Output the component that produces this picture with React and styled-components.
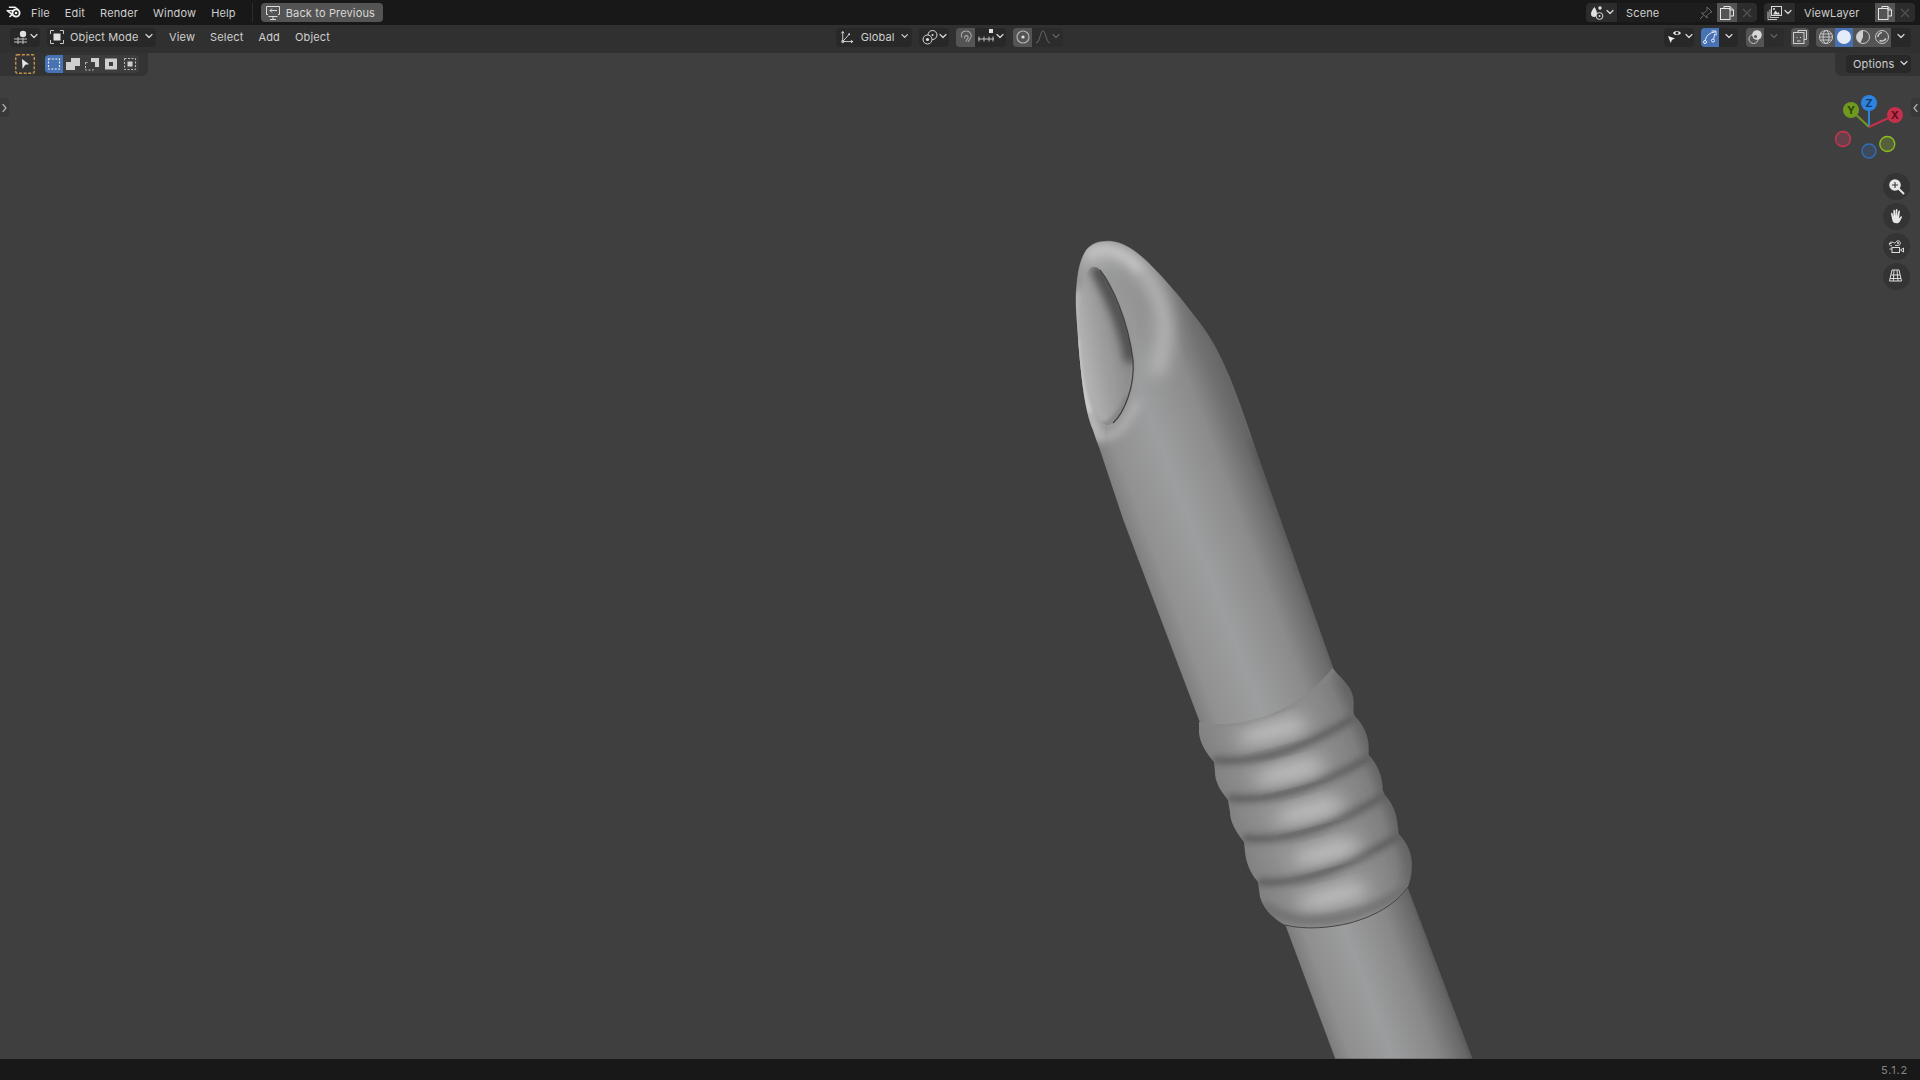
import styled, { createGlobalStyle } from "styled-components";

const GlobalStyle = createGlobalStyle`
  html, body {
    margin: 0;
    height: 100%;
    overflow: hidden;
    background: #181818;
  }
  #root {
    height: 100%;
  }
`;

const Screen = styled.div`
  display: flex;
  flex-direction: column;
  height: 100vh;
  font-family: Inter, "Liberation Sans", sans-serif;
  font-size: 11px;
  letter-spacing: 0.15px;
  color: #cfcfcf;
`;

const TopBar = styled.header`
  display: flex;
  align-items: center;
  flex: 0 0 25px;
  padding: 0 5px 0 6px;
  background: #181818;
`;

const Menu = styled.nav`
  display: flex;
  gap: 15px;
  margin-left: 8px;
`;

const Divider = styled.span`
  width: 1px;
  height: 19px;
  margin: 0 8px 0 16px;
  background: #2c2c2c;
`;

const BackButton = styled.button`
  display: flex;
  align-items: center;
  gap: 5px;
  width: 122px;
  height: 19px;
  padding: 0 0 0 4px;
  border: 0;
  border-radius: 4px;
  background: #545454;
  color: #d8d8d8;
  font: inherit;
  letter-spacing: inherit;
`;

const Spacer = styled.div`
  flex: 1;
`;

const Row = styled.div`
  display: flex;
  align-items: center;
  margin-left: ${(p) => p.$ml ?? 0}px;
`;

const Group = styled.div`
  display: flex;
  align-items: stretch;
  height: ${(p) => p.$h ?? 19}px;
  margin-left: ${(p) => p.$ml ?? 0}px;
  border-radius: 4px;
  overflow: hidden;
`;

const tones = {
  dark: "#282828",
  light: "#545454",
  mid: "#3d3d3d",
  blue: "#4772b3",
  dim: "#2c2c2c",
  field: "#1d1d1d",
};

const Seg = styled.div`
  display: flex;
  align-items: center;
  justify-content: ${(p) => p.$justify ?? "center"};
  gap: ${(p) => p.$gap ?? 1}px;
  box-sizing: border-box;
  flex: 0 0 ${(p) => p.$w}px;
  width: ${(p) => p.$w}px;
  padding: ${(p) => p.$pad ?? 0};
  background: ${(p) => tones[p.$tone ?? "dark"]};
  margin-left: ${(p) => p.$ml ?? 0}px;
`;

const Label = styled.span`
  flex: 1;
  white-space: nowrap;
`;

const Header = styled.div`
  display: flex;
  align-items: center;
  flex: 0 0 28px;
  padding: 0 9px 4px 10px;
  box-sizing: border-box;
  background: #303030;
`;

const HeaderLeft = styled.div`
  display: flex;
  align-items: center;
  flex: 0 0 826px;
`;

const HeaderMenu = styled.nav`
  display: flex;
  gap: 15px;
  margin-left: 13px;
`;

const Viewport = styled.main`
  position: relative;
  flex: 1;
  background: #3f3f3f;
  overflow: hidden;
`;

const Scene3D = styled.svg`
  position: absolute;
  inset: 0;
  width: 100%;
  height: 100%;
`;

const ToolRow = styled.div`
  position: relative;
  display: flex;
  justify-content: space-between;
  align-items: flex-start;
`;

const ToolPanel = styled.div`
  display: flex;
  align-items: center;
  width: 148px;
  height: 23px;
  box-sizing: border-box;
  padding: 0 0 2px 15px;
  background: #333333;
  border-radius: 0 0 6px 0;
`;

const OptionsPanel = styled.div`
  display: flex;
  justify-content: flex-end;
  align-items: center;
  width: 85px;
  height: 23px;
  box-sizing: border-box;
  padding: 0 9px 1px 0;
  background: #333333;
  border-radius: 0 0 0 6px;
`;

const OptionsButton = styled.div`
  display: flex;
  align-items: center;
  justify-content: space-between;
  width: 65px;
  height: 18px;
  box-sizing: border-box;
  padding: 0 3px 0 7px;
  background: #282828;
  border-radius: 4px;
`;

const EdgeTab = styled.div`
  position: absolute;
  top: 45px;
  ${(p) => (p.$right ? "right: 0;" : "left: 0;")}
  display: flex;
  align-items: center;
  justify-content: center;
  width: 9px;
  height: 19px;
  background: #383838;
  border-radius: ${(p) => (p.$right ? "4px 0 0 4px" : "0 4px 4px 0")};
`;

const Gizmo = styled.svg`
  position: absolute;
  top: 37px;
  right: 12px;
  width: 76px;
  height: 74px;
`;

const NavStack = styled.div`
  position: absolute;
  top: 120px;
  right: 10px;
  display: flex;
  flex-direction: column;
  gap: 3px;
`;

const NavButton = styled.div`
  display: flex;
  align-items: center;
  justify-content: center;
  width: 27px;
  height: 27px;
  border-radius: 50%;
  background: #343434;
`;

const StatusBar = styled.footer`
  display: flex;
  justify-content: flex-end;
  align-items: center;
  flex: 0 0 21px;
  padding-right: 12px;
  background: #181818;
  color: #858585;
  font-size: 11px;
  letter-spacing: 0.8px;
`;

const Chev = ({ dir = "down", color = "#d8d8d8" }) => {
  const pts = {
    down: "1,1.5 4,4.5 7,1.5",
    left: "5,0.5 2,4 5,7.5",
    right: "2,0.5 5,4 2,7.5",
  }[dir];
  return (
    <svg width="8" height="8" viewBox="0 0 8 8" fill="none">
      <polyline points={pts} stroke={color} strokeWidth="1.2" strokeLinecap="round" strokeLinejoin="round" />
    </svg>
  );
};

const Ico = ({ children, size = 16, ...rest }) => (
  <svg width={size} height={size} viewBox={`0 0 ${size} ${size}`} fill="none" stroke="#dadada" strokeWidth="1" {...rest}>
    {children}
  </svg>
);

const White = "#e0e0e0";

const BlenderLogo = () => (
  <Ico size={17}>
    <circle cx="10" cy="9" r="3.6" strokeWidth="1.9" stroke="#f0f0f0" />
    <circle cx="10" cy="9" r="1.3" fill="#f0f0f0" stroke="none" />
    <path d="M1 6.6h7M3.4 3.2l5.6 .1 3 2.2M1.2 6.6l5 4M6.2 10.6 3.8 12.6" stroke="#f0f0f0" strokeWidth="1.4" strokeLinecap="round" />
  </Ico>
);

const BackIcon = () => (
  <Ico>
    <path d="M3 9.500H1.500v-8h13v8H13" />
    <path d="M5 14.500h6M8 11.500v3M12 5.500H5M7 3.500l-2 2 2 2" />
    <path d="M3.500 11.500h9" />
  </Ico>
);

const EditorIcon = () => (
  <Ico>
    <circle cx="10" cy="5" r="3.2" fill={White} stroke="none" />
    <path d="M1 10h13M1 13h13M5 8v7M10 9v6" stroke="#bdbdbd" />
  </Ico>
);

const ModeIcon = () => (
  <Ico>
    <rect x="4.500" y="4.500" width="7" height="7" fill={White} stroke="none" />
    <path d="M1.500 5V1.500H5M11 1.500h3.500V5M14.500 11v3.500H11M5 14.500H1.500V11" stroke="#c8c8c8" />
  </Ico>
);

const OrientIcon = () => (
  <Ico>
    <path d="M3 2v11h11M3 13l7-8M1.500 4 3 2l1.500 2M12 11.500l2 1.500-2 1.500" />
    <circle cx="3" cy="13" r="1.300" />
    <circle cx="10" cy="5" r="1" fill={White} stroke="none" />
  </Ico>
);

const PivotIcon = () => (
  <Ico>
    <circle cx="10.500" cy="6" r="4.500" />
    <circle cx="5.500" cy="10.500" r="4.500" fill="#282828" />
    <circle cx="5.500" cy="10.500" r="1.600" fill={White} stroke="none" />
    <circle cx="10.500" cy="6" r="1" fill={White} stroke="none" />
  </Ico>
);

const MagnetIcon = () => (
  <Ico stroke="#a8a8a8">
    <path d="M4 8.500C2 5.500 4 2 8 2c4 0 6.500 3.500 4.500 7l-2.500 4M7 9.500c-1-1.200 0-3 1.500-2.900 1.500.1 2 1.600 1.300 2.700l-2 3.200" strokeWidth="1.100" />
  </Ico>
);

const IncrementIcon = () => (
  <Ico size={18}>
    <rect x="12" y="1" width="4" height="4" fill={White} stroke="none" />
    <path d="M1 11h16M2 8.500v5M7 8.500v5M12 8.500v5M16 8.500v5" stroke="#c0c0c0" />
  </Ico>
);

const ProportionalIcon = () => (
  <Ico stroke="#b0b0b0">
    <circle cx="8" cy="8" r="6" strokeWidth="1.200" />
    <circle cx="8" cy="8" r="1.600" fill={White} stroke="none" />
  </Ico>
);

const FalloffIcon = () => (
  <Ico stroke="#5f5f5f">
    <path d="M1 14c4 0 4-12 7-12s3 12 7 12" strokeWidth="1.100" />
  </Ico>
);

const SceneIcon = () => (
  <Ico>
    <path d="M5.500 2c-2 2.600-3.500 4.600-3.500 7 0 1.600 1 3 3 3 1.500 0 3-1 3-3.500 0-2-1-4-2.500-6.500z" fill={White} stroke="none" />
    <circle cx="11" cy="3" r="1.700" fill={White} stroke="none" />
    <circle cx="10.500" cy="11" r="3.400" fill="#2c2c2c" />
    <circle cx="10.500" cy="11" r="1" fill={White} stroke="none" />
  </Ico>
);

const PinIcon = () => (
  <Ico stroke="#6a6a6a">
    <path d="M9 2l5 5-2 .5-3 3 .2 2.500L3.500 8l2.500.2 3-3zM5.500 10.500 2 14" />
  </Ico>
);

const CopyIcon = () => (
  <Ico stroke="#e4e4e4">
    <path d="M5 3.500V1.500h6l3.500 3.500v6h-3M11 1.500v3.500h3.500" />
    <rect x="1.500" y="3.500" width="9.500" height="11" />
  </Ico>
);

const CloseIcon = ({ color = "#505050" }) => (
  <Ico stroke={color} strokeWidth="1.400">
    <path d="M4 4l8 8M12 4l-8 8" />
  </Ico>
);

const LayerIcon = () => (
  <Ico>
    <rect x="4.500" y="1.500" width="10" height="9" fill="#2c2c2c" />
    <path d="M6 9.500l2.500-4 2 2.500 1-1 1.500 2.500z" fill={White} stroke="none" />
    <circle cx="7" cy="4" r="1" fill={White} stroke="none" />
    <path d="M3 4.500v8h9M1 6.500v8h9" stroke="#c8c8c8" />
  </Ico>
);

const VisibilityIcon = () => (
  <Ico size={18}>
    <path d="M7 5c1.500-2.700 6-2.700 8 0-2 2.700-6.500 2.700-8 0z" fill="#f0f0f0" stroke="none" />
    <circle cx="11" cy="5" r="1.600" fill="#282828" stroke="none" />
    <path d="M2 8l7 2.500-3 1.200-1.300 3.300z" fill="#f0f0f0" stroke="none" />
  </Ico>
);

const GizmoIcon = () => (
  <Ico stroke="#eaf0fa">
    <path d="M3 13C3.500 7 7.500 3.500 13 3M9.500 2H14v4.500M11 11c1-2 1.500-4 1.500-6" />
    <circle cx="3" cy="13" r="1.500" fill="#4772b3" />
    <circle cx="11" cy="11.500" r="1.500" fill="#4772b3" />
  </Ico>
);

const OverlayIcon = () => (
  <Ico>
    <circle cx="6.500" cy="10" r="4.500" stroke="#c4c4c4" />
    <circle cx="10" cy="6" r="4.800" fill="#d8d8d8" stroke="none" />
    <circle cx="8.500" cy="7.500" r="1.500" fill="#545454" stroke="none" />
  </Ico>
);

const XrayIcon = () => (
  <Ico stroke="#d0d0d0">
    <path d="M6 3.500V1.500h8.500v9H12" />
    <rect x="1.500" y="3.500" width="10.500" height="11" />
    <path d="M5 8v1M8.500 8v1M5 12h3.500" />
  </Ico>
);

const WireIcon = () => (
  <Ico stroke="#c8c8c8">
    <circle cx="8" cy="8" r="6.500" />
    <ellipse cx="8" cy="8" rx="3" ry="6.500" />
    <path d="M1.500 8h13M2.500 5h11M2.500 11h11" />
  </Ico>
);

const SolidIcon = () => (
  <Ico>
    <circle cx="8" cy="8" r="7" fill="#e4ecfa" stroke="none" />
  </Ico>
);

const MaterialIcon = () => (
  <Ico stroke="#c8c8c8">
    <circle cx="8" cy="8" r="6.500" />
    <path d="M8 1.500a6.500 6.500 0 0 0-6.500 6.500c0 2.700 1.600 5 4 6L8 8z" fill="#cfcfcf" stroke="none" />
  </Ico>
);

const RenderedIcon = () => (
  <Ico stroke="#c8c8c8">
    <circle cx="8" cy="8" r="6.500" />
    <path d="M4 8c0-2.500 1.500-4 4-4.500M5.500 11.500c2 1.200 5 .5 6.500-2" strokeWidth="1.500" />
  </Ico>
);

const SelectToolIcon = () => (
  <svg width="20" height="20" viewBox="0 0 20 20" fill="none">
    <rect x="0.750" y="0.750" width="18.500" height="18.500" rx="1.500" stroke="#c4924d" strokeWidth="1.400" strokeDasharray="3 1.600" />
    <path d="M7 5l7 5.200-3.800.500L7.600 15z" fill="#e8e8e8" />
  </svg>
);

const SetIcon = () => (
  <Ico>
    <rect x="2.500" y="3" width="11" height="10" stroke="#f0f0f0" strokeWidth="1.200" strokeDasharray="2 1.400" />
  </Ico>
);

const ExtendIcon = () => (
  <Ico>
    <path d="M6 2h9v8H10v4H1V6h5z" fill="#cfcfcf" stroke="none" />
  </Ico>
);

const SubtractIcon = () => (
  <Ico>
    <path d="M7 2h8v9h-4V6H7z" fill="#cfcfcf" stroke="none" />
    <path d="M1.500 6.500h3M1.500 6.500v7.500h8v-2" stroke="#bcbcbc" strokeDasharray="2 1.500" />
  </Ico>
);

const InvertIcon = () => (
  <Ico>
    <path d="M2 2.500h12v11H2zM6 6v4h4V6z" fill="#cfcfcf" fillRule="evenodd" stroke="none" />
  </Ico>
);

const IntersectIcon = () => (
  <Ico>
    <rect x="2.500" y="2.500" width="11" height="11" stroke="#bcbcbc" strokeDasharray="2 1.500" />
    <rect x="5.500" y="5.500" width="5" height="5" fill="#cfcfcf" stroke="none" />
  </Ico>
);

const ZoomIcon = () => (
  <Ico size={20}>
    <path d="M11.500 11.500 16.500 16.500" stroke="#e6e6e6" strokeWidth="2" strokeLinecap="round" />
    <circle cx="8" cy="8" r="5.800" fill="#e6e6e6" stroke="none" />
    <path d="M5 8h6M8 5v6" stroke="#333" strokeWidth="1.100" />
  </Ico>
);

const HandIcon = () => (
  <Ico size={20}>
    <path
      d="M4 6.500c0-1 1.500-1 1.600 0l.7 3 .1-6c0-1.100 1.500-1.100 1.600 0l.3 5.500.5-6.300c.1-1 1.600-.9 1.600.1l-.2 6.400 1.200-5c.3-1 1.700-.6 1.500.4l-.9 6.900 1.700-2.100c.8-.7 1.800.2 1.200 1.100L12.600 15c-.8 1-1.800 1.300-3.100 1.300-2.400 0-3.700-1.100-4.200-3.300z"
      fill="#e6e6e6"
      stroke="none"
    />
  </Ico>
);

const CameraIcon = () => (
  <Ico size={20}>
    <path d="M5 8.800h-1c-2.200 0-2.200-3.600 0-3.600h1.500c1 0 1.300.8 2.200.8 1 0 1.300-2.200 3.500-2.200 2.800 0 2.800 4.600 0 4.600H8" stroke="#dcdcdc" />
    <circle cx="11" cy="6" r="1" fill="#dcdcdc" stroke="none" />
    <path d="M2.500 6.500h2" stroke="#dcdcdc" />
    <rect x="5" y="10.500" width="7.500" height="5" stroke="#dcdcdc" />
    <path d="M2.500 12h2.500M16.500 11v4l-3-2z" stroke="#dcdcdc" />
  </Ico>
);

const PerspectiveIcon = () => (
  <Ico size={20}>
    <path d="M5 3h7l2.500 11H2.500zM4 8h9M3 11.500h11M7 3 6.300 14M10 3l1 11" stroke="#dcdcdc" />
  </Ico>
);

const tipPath =
  "M1076,310 C1075,280 1078,262 1086,250 C1092,243 1100,240 1112,241 C1125,243 1135,250 1148,262 C1165,279 1180,296 1195,316 C1208,332 1218,350 1225,366 C1232,381 1238,398 1243,412 L1345,700 L1210,750 L1123,520 L1093,430 C1084,410 1080,370 1076,310 Z";
const ringEdge =
  "M1333,668 C1340,678 1354,686 1354,703 C1354,708 1353,712 1355,716 C1363,724 1369,735 1369,748 L1369,755 C1377,763 1383,776 1383,790 L1385,795 C1393,803 1397,814 1398,826 L1399,834 C1408,843 1413,855 1412,868 C1412,875 1410,882 1408,887";
const ringPath = `${ringEdge} C1395,905 1375,916 1350,923 C1330,928 1305,930 1285,925 C1272,918 1263,908 1260,897 L1258,882 C1250,873 1246,862 1245,852 L1244,842 C1236,832 1230,822 1230,812 L1228,800 C1220,790 1215,782 1215,772 L1214,762 C1205,752 1200,742 1199,733 L1199,722 C1240,730 1295,715 1333,668 Z`;
const holePath =
  "M1100,270 C1112,285 1128,320 1133,360 C1135,390 1122,420 1110,425 C1098,428 1088,400 1082,370 C1078,335 1079,300 1084,280 C1088,266 1094,264 1100,270 Z";

const grooves = [
  "M1213,760 C1260,765 1310,745 1355,717",
  "M1228,798 C1275,803 1325,783 1370,757",
  "M1243,838 C1290,843 1340,823 1385,795",
  "M1258,882 C1305,886 1355,863 1400,835",
];
const highlights = [
  [1273, 731],
  [1290, 772],
  [1310, 811],
  [1327, 852],
  [1333, 896],
];

const App = () => (
  <Screen>
    <GlobalStyle />
    <TopBar>
      <BlenderLogo />
      <Menu>
        <span>File</span>
        <span>Edit</span>
        <span>Render</span>
        <span>Window</span>
        <span>Help</span>
      </Menu>
      <Divider />
      <BackButton>
        <BackIcon />
        Back to Previous
      </BackButton>
      <Spacer />
      <Group>
        <Seg $w={31} $tone="dim">
          <SceneIcon />
          <Chev />
        </Seg>
        <Seg $w={99} $tone="field" $pad="0 3px 0 8px" $ml={1}>
          <Label>Scene</Label>
          <PinIcon />
        </Seg>
        <Seg $w={20} $tone="light">
          <CopyIcon />
        </Seg>
        <Seg $w={20} $tone="dim">
          <CloseIcon />
        </Seg>
      </Group>
      <Group $ml={7}>
        <Seg $w={31} $tone="dim">
          <LayerIcon />
          <Chev />
        </Seg>
        <Seg $w={79} $tone="field" $pad="0 0 0 8px" $ml={1}>
          <Label>ViewLayer</Label>
        </Seg>
        <Seg $w={20} $tone="light">
          <CopyIcon />
        </Seg>
        <Seg $w={20} $tone="dim">
          <CloseIcon />
        </Seg>
      </Group>
    </TopBar>

    <Header>
      <HeaderLeft>
        <Group>
          <Seg $w={30}>
            <EditorIcon />
            <Chev />
          </Seg>
        </Group>
        <Group $ml={7}>
          <Seg $w={109} $gap={5} $pad="0 3px 0 2px">
            <ModeIcon />
            <Label>Object Mode</Label>
            <Chev />
          </Seg>
        </Group>
        <HeaderMenu>
          <span>View</span>
          <span>Select</span>
          <span>Add</span>
          <span>Object</span>
        </HeaderMenu>
      </HeaderLeft>
      <Group>
        <Seg $w={76} $gap={6} $pad="0 4px 0 4px">
          <OrientIcon />
          <Label>Global</Label>
          <Chev />
        </Seg>
      </Group>
      <Group $ml={7}>
        <Seg $w={30}>
          <PivotIcon />
          <Chev />
        </Seg>
      </Group>
      <Group $ml={7}>
        <Seg $w={19} $tone="light">
          <MagnetIcon />
        </Seg>
        <Seg $w={31}>
          <IncrementIcon />
          <Chev />
        </Seg>
      </Group>
      <Group $ml={7}>
        <Seg $w={19} $tone="light">
          <ProportionalIcon />
        </Seg>
        <Seg $w={31} $tone="dim">
          <FalloffIcon />
          <Chev color="#5f5f5f" />
        </Seg>
      </Group>
      <Spacer />
      <Row>
        <Group>
          <Seg $w={30}>
            <VisibilityIcon />
            <Chev />
          </Seg>
        </Group>
        <Group $ml={7}>
          <Seg $w={18} $tone="blue">
            <GizmoIcon />
          </Seg>
          <Seg $w={19}>
            <Chev />
          </Seg>
        </Group>
        <Group $ml={8}>
          <Seg $w={18} $tone="light">
            <OverlayIcon />
          </Seg>
          <Seg $w={20} $tone="dim">
            <Chev color="#5f5f5f" />
          </Seg>
        </Group>
        <Group $ml={7}>
          <Seg $w={18} $tone="light">
            <XrayIcon />
          </Seg>
        </Group>
        <Group $ml={7}>
          <Seg $w={19} $tone="light">
            <WireIcon />
          </Seg>
          <Seg $w={18} $tone="blue">
            <SolidIcon />
          </Seg>
          <Seg $w={19} $tone="light">
            <MaterialIcon />
          </Seg>
          <Seg $w={19} $tone="light">
            <RenderedIcon />
          </Seg>
          <Seg $w={20}>
            <Chev />
          </Seg>
        </Group>
      </Row>
    </Header>

    <Viewport>
      <Scene3D viewBox="0 53 1920 1006" preserveAspectRatio="none">
        <defs>
          <linearGradient id="upperTube" gradientUnits="userSpaceOnUse" x1="1123" y1="520" x2="1261" y2="468">
            <stop offset="0" stopColor="#7e7e7e" />
            <stop offset="0.12" stopColor="#919191" />
            <stop offset="0.42" stopColor="#9d9e9f" />
            <stop offset="0.75" stopColor="#8b8b8b" />
            <stop offset="0.95" stopColor="#6a6a6a" />
            <stop offset="1" stopColor="#5a5a5a" />
          </linearGradient>
          <linearGradient id="lowerTube" gradientUnits="userSpaceOnUse" x1="1313" y1="1000" x2="1435" y2="955">
            <stop offset="0" stopColor="#7c7c7c" />
            <stop offset="0.12" stopColor="#8f8f8f" />
            <stop offset="0.42" stopColor="#9c9d9e" />
            <stop offset="0.75" stopColor="#888888" />
            <stop offset="0.95" stopColor="#686868" />
            <stop offset="1" stopColor="#585858" />
          </linearGradient>
          <linearGradient id="ringBase" gradientUnits="userSpaceOnUse" x1="1230" y1="815" x2="1385" y2="757">
            <stop offset="0" stopColor="#828282" />
            <stop offset="0.2" stopColor="#919191" />
            <stop offset="0.55" stopColor="#969696" />
            <stop offset="0.85" stopColor="#808080" />
            <stop offset="1" stopColor="#626262" />
          </linearGradient>
          <linearGradient id="holeFill" gradientUnits="userSpaceOnUse" x1="1080" y1="350" x2="1134" y2="340">
            <stop offset="0" stopColor="#b4b4b4" />
            <stop offset="0.4" stopColor="#9e9e9e" />
            <stop offset="1" stopColor="#838383" />
          </linearGradient>
          <filter id="blur2" x="-30%" y="-30%" width="160%" height="160%">
            <feGaussianBlur stdDeviation="2" />
          </filter>
          <filter id="blur4" x="-30%" y="-30%" width="160%" height="160%">
            <feGaussianBlur stdDeviation="4" />
          </filter>
          <filter id="blur8" x="-50%" y="-50%" width="200%" height="200%">
            <feGaussianBlur stdDeviation="8" />
          </filter>
          <clipPath id="tipClip">
            <path d={tipPath} />
          </clipPath>
          <clipPath id="ringClip">
            <path d={ringPath} />
          </clipPath>
          <clipPath id="holeClip">
            <path d={holePath} />
          </clipPath>
        </defs>

        <path d="M1285,925 L1335,1059 L1473,1059 L1408,887 Z" fill="url(#lowerTube)" stroke="#3a3a3a" strokeOpacity="0.6" />
        <path d={tipPath} fill="url(#upperTube)" stroke="#383838" strokeOpacity="0.55" />

        <g clipPath="url(#tipClip)">
          <path d="M1085,262 C1110,236 1148,265 1160,300 C1168,325 1165,350 1155,375" stroke="#bcbcbc" strokeWidth="14" fill="none" filter="url(#blur8)" />
          <path d="M1087,255 C1105,242 1125,252 1140,270" stroke="#c8c8c8" strokeWidth="7" fill="none" filter="url(#blur4)" />
          <path d="M1200,330 C1225,365 1240,405 1255,440" stroke="#707070" strokeWidth="12" fill="none" filter="url(#blur8)" />
          <path d="M1076,290 C1076,350 1084,400 1098,440" stroke="#b9b9b9" strokeWidth="14" fill="none" filter="url(#blur4)" />
          <path d="M1078,340 C1080,370 1084,395 1090,412" stroke="#e2e2e2" strokeWidth="3" fill="none" filter="url(#blur2)" />
          <path d="M1092,432 C1105,445 1125,432 1138,400" stroke="#b0b0b0" strokeWidth="8" fill="none" filter="url(#blur4)" />
        </g>

        <g clipPath="url(#tipClip)">
          <path d={holePath} fill="url(#holeFill)" filter="url(#blur2)" />
        </g>
        <g clipPath="url(#holeClip)">
          <path d="M1096,266 C1112,295 1128,330 1132,362" stroke="#4f4f4f" strokeWidth="15" fill="none" filter="url(#blur4)" />
          <path d="M1092,425 C1105,430 1118,420 1128,395" stroke="#7d7d7d" strokeWidth="4" fill="none" filter="url(#blur2)" />
        </g>
        <path d="M1100,270 C1112,285 1128,320 1133,360 C1135,385 1125,412 1113,423" fill="none" stroke="#3e3e3e" strokeWidth="1.200" />

        <path d={ringPath} fill="url(#ringBase)" />
        <path d={ringEdge} fill="none" stroke="#3a3a3a" strokeOpacity="0.7" />
        <g clipPath="url(#ringClip)">
          <path d="M1199,722 C1240,730 1295,715 1333,668" fill="none" stroke="#878787" strokeWidth="4" filter="url(#blur2)" />
          {grooves.map((d) => (
            <path key={d} d={d} fill="none" stroke="#5e5e5e" strokeWidth="7" filter="url(#blur4)" />
          ))}
          {grooves.map((d) => (
            <path key={`${d}-in`} d={d} fill="none" stroke="#5a5a5a" strokeWidth="2" filter="url(#blur2)" />
          ))}
          {highlights.map(([cx, cy]) => (
            <ellipse
              key={cx}
              cx={cx}
              cy={cy}
              rx="36"
              ry="8"
              fill="#c2c2c2"
              filter="url(#blur8)"
              transform={`rotate(-14 ${cx} ${cy})`}
            />
          ))}
          <path d="M1340,675 C1360,700 1375,745 1390,790 C1405,830 1418,860 1410,890" fill="none" stroke="#5c5c5c" strokeWidth="12" filter="url(#blur8)" />
          <path d="M1262,905 C1300,932 1360,922 1408,887" fill="none" stroke="#6a6a6a" strokeWidth="8" filter="url(#blur4)" />
        </g>
        <path d="M1285,925 C1305,930 1330,928 1350,923 C1375,916 1395,905 1408,887" fill="none" stroke="#444" strokeWidth="1" />
      </Scene3D>

      <ToolRow>
        <ToolPanel>
          <SelectToolIcon />
          <Group $ml={10} $h={18}>
            <Seg $w={18} $tone="blue">
              <SetIcon />
            </Seg>
            <Seg $w={19} $tone="mid">
              <ExtendIcon />
            </Seg>
            <Seg $w={19} $tone="mid">
              <SubtractIcon />
            </Seg>
            <Seg $w={19} $tone="mid">
              <InvertIcon />
            </Seg>
            <Seg $w={19} $tone="mid">
              <IntersectIcon />
            </Seg>
          </Group>
        </ToolPanel>
        <OptionsPanel>
          <OptionsButton>
            Options
            <Chev />
          </OptionsButton>
        </OptionsPanel>
      </ToolRow>

      <EdgeTab>
        <Chev dir="right" color="#b0b0b0" />
      </EdgeTab>
      <EdgeTab $right>
        <Chev dir="left" color="#b0b0b0" />
      </EdgeTab>

      <Gizmo viewBox="1832 90 76 74">
        <path d="M1869,127 L1869,103" stroke="#2f83d8" strokeWidth="2" />
        <path d="M1869,127 L1851,110" stroke="#6f9a1f" strokeWidth="2" />
        <path d="M1869,127 L1895,115" stroke="#c5304a" strokeWidth="2" />
        <circle cx="1843" cy="139" r="7.500" fill="#67414a" stroke="#d2334f" strokeWidth="1.300" />
        <circle cx="1887.300" cy="144" r="7.500" fill="#56613c" stroke="#8fbf1f" strokeWidth="1.300" />
        <circle cx="1869" cy="151" r="7" fill="#3d4a5c" stroke="#2f6fc0" strokeWidth="1.300" />
        <circle cx="1869" cy="103" r="8" fill="#2f83e0" />
        <circle cx="1851" cy="110" r="8" fill="#6f9a1f" />
        <circle cx="1895" cy="115" r="8" fill="#c5304a" />
        <text x="1869" y="107" textAnchor="middle" fontSize="11" fontWeight="700" fill="#123a66" fontFamily="Inter">Z</text>
        <text x="1851" y="114" textAnchor="middle" fontSize="11" fontWeight="700" fill="#2f4108" fontFamily="Inter">Y</text>
        <text x="1895" y="119" textAnchor="middle" fontSize="11" fontWeight="700" fill="#5c0f1e" fontFamily="Inter">X</text>
      </Gizmo>

      <NavStack>
        <NavButton>
          <ZoomIcon />
        </NavButton>
        <NavButton>
          <HandIcon />
        </NavButton>
        <NavButton>
          <CameraIcon />
        </NavButton>
        <NavButton>
          <PerspectiveIcon />
        </NavButton>
      </NavStack>
    </Viewport>

    <StatusBar>5.1.2</StatusBar>
  </Screen>
);

export default App;
